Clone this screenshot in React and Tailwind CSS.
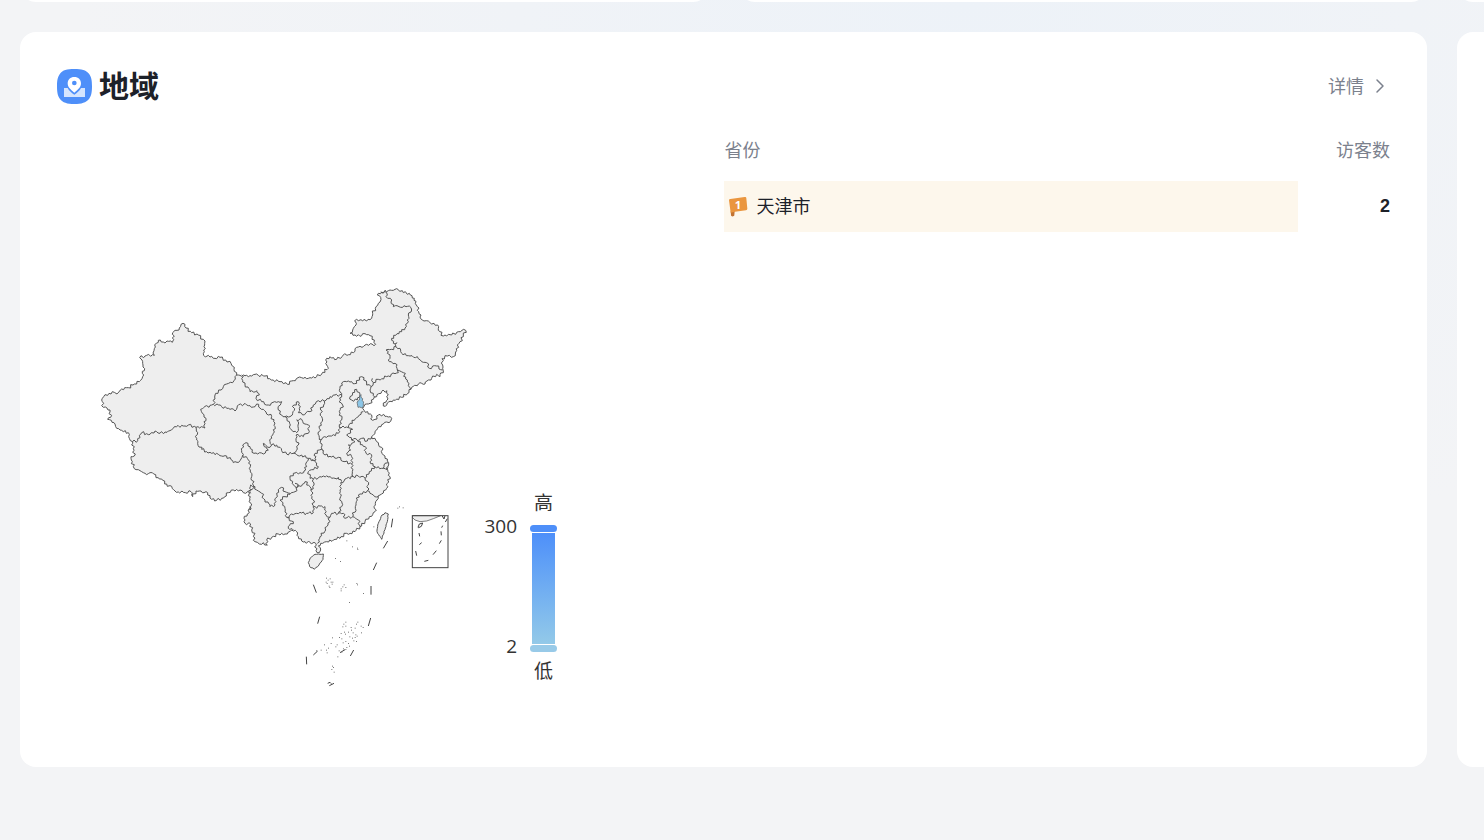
import React from "react";
import { ChevronRight } from "lucide-react";

const parse = (text) => text.trim().split(/\s+/).map((p) => p.split(",").map(Number));
const shift = (dx, dy) => (text) => parse(text).map(([x, y]) => [x + dx, y + dy]);

// Each sheet of the map has its own origin
const west  = shift(0, 90);
const south = shift(405, 240);
const north = shift(645, 0);
const sea   = shift(600, 660);

// Breaks long segments into small steps so borders look surveyed, not ruled
const rough = (points, amount = 4) => {
  const out = [points[0]];
  for (let i = 1; i < points.length; i++) {
    const [ax, ay] = points[i - 1];
    const [bx, by] = points[i];
    const len = Math.hypot(bx - ax, by - ay);
    const steps = Math.floor(len / 5);
    for (let s = 1; s < steps; s++) {
      const t = s / steps;
      const noise = Math.sin(ax * 12.9 + by * 78.2 + s * 37.7 + s * s * 5.3);
      out.push([
        Math.round(ax + (bx - ax) * t - ((by - ay) / len) * noise * amount),
        Math.round(ay + (by - ay) * t + ((bx - ax) / len) * noise * amount),
      ]);
    }
    out.push([bx, by]);
  }
  return "M" + out.map((p) => p.join(" ")).join("L");
};

const OUTLINE = [
  ...west("20,270 26,260 42,250 58,247 66,252 76,240 100,233 118,222 137,211 143,200 142,190 148,182 144,165 141,150 134,143 155,136 178,136 177,122 184,100 190,91 205,96 232,97 236,88 233,68 240,61 252,60 258,43 270,43 273,54 290,68 310,75 325,88 329,100 326,120 326,136 345,141 375,142 392,150 408,160 417,178 425,195"),
  ...south("40,45 60,47 85,46 105,48 130,60 150,65 172,73 190,62 215,53"),
  ...north("0,293 20,290 38,277 55,265 47,250 50,235 60,230 80,238 100,225 130,218 140,202 165,195 197,193 193,180 180,167 165,161 155,167 135,165 120,160 128,150 140,118 158,123 185,115 188,100 198,80 210,66 212,52 202,45 215,36 245,31 265,29 280,38 298,40 313,55 322,80 337,120 360,128 383,135 390,155 400,168 425,165 445,155 467,151 460,170 447,190 440,212 430,230 412,228 396,236 398,255 400,272 390,290 380,283 365,295 345,312 325,312 303,328 275,352 250,360 230,375 220,378"),
  ...south("460,135 475,105 470,92 455,95 440,110 430,118 420,130 405,133 398,145 403,152 425,165 422,177 435,178 450,163 485,175 482,184 460,192 440,210 430,225 425,230 440,245 455,262 460,285 472,303 476,315 468,325 474,335 480,350 472,370 470,385 450,405 445,415 437,425 435,455 418,470 405,485 390,500 375,515 350,520 333,530 310,540 290,545 272,550 265,558 272,570 268,578 258,572 257,550 240,548 215,543 205,530 200,515 185,510 165,522 145,522 125,532 110,540 112,555 100,548 88,552 75,545 70,530 75,520 65,510 62,492 45,490 42,475 52,462 62,440"),
  ...west("466,600 466,560 458,545 445,548 435,540 415,540 400,548 380,565 365,571 350,568 338,548 318,543 303,543 293,560 288,545 265,547 240,543 215,522 190,503 165,488 155,494 140,485 115,470 108,440 118,438 115,415 113,395 103,385 100,368 75,360 62,350 60,342 38,328 47,322 45,300 25,292 20,270"),
];

const BORDERS = [
  west("113,395 128,392 140,368 165,373 180,363 195,370 225,362 245,350 280,345 303,352"),
  west("303,352 330,354 327,335 333,325 322,310 317,298 355,283 362,250 378,240 395,222 417,212 425,195"),
  west("303,352 305,390 320,418 350,430 395,438 415,458 435,452 443,436 460,450 470,490 475,535 466,540 458,545"),
  south("38,288 38,255 48,248 60,260 72,280 100,282 115,270 100,250 120,262 125,255"),
  west("355,283 380,290 420,303 437,282 455,285 480,290"),
  south("75,140 80,132 100,148 125,170 135,200 128,225 120,245 125,255 140,255 155,272 170,282 190,280 215,285 235,295"),
  south("35,45 45,75 60,95 80,92 88,105 78,115 95,125 115,135 140,127 155,125 145,150 155,165 165,170 180,170 187,165 192,135 205,125 208,145 205,158 218,165 240,155 250,135 265,122 283,123 300,110 335,105"),
  south("165,170 178,185 185,210 200,218 205,205 200,180 215,178 220,190 235,195 238,215 220,230 198,225 205,255 190,280"),
  north("262,270 255,250 238,245 235,215 228,210 245,208 258,200 260,188 250,190 245,175 275,155 292,130 295,105 305,90 298,78 278,82 250,80 245,60 228,50 230,38 212,36"),
  north("258,200 270,205 275,220 300,228 322,230 335,245 350,248 358,265 380,258 398,270"),
  north("262,270 280,278 292,300 302,327"),
  north("262,270 265,278 230,290 205,298 190,308 187,295"),
  north("95,345 90,325 100,305 115,303 140,310 148,292 162,293 170,315 183,320 190,308"),
  north("183,320 180,330 190,340 195,352"),
  north("120,350 128,338 140,328 150,345 142,360 125,360 120,350"),
  south("335,105 327,125 338,135 330,160 335,180 328,200 325,220 300,228 268,238 268,205 278,180 272,150 283,123"),
  south("328,200 355,203 360,190 385,170 400,155"),
  south("355,203 368,208 350,225 365,240 375,235 385,245 395,235 412,243 425,230"),
  south("365,240 375,245 355,255 362,270 350,280 365,290 365,312 370,350"),
  south("268,238 280,272 285,285 325,292 345,305 365,312"),
  south("385,245 405,260 408,280 425,285 420,305 435,320 460,325 465,310 474,308"),
  south("460,325 470,330 474,322"),
  south("435,320 418,335 405,355 415,375 412,392 385,405 378,435 368,470 345,475 340,460 325,460"),
  south("370,350 385,348 405,355"),
  south("412,392 420,400 445,410"),
  south("368,470 385,480 390,500"),
  south("370,350 350,355 332,368 330,390 330,415 335,440 325,460 305,460 300,472 288,465 285,440 250,442"),
  south("250,358 270,350 290,347 305,355 325,352 335,365"),
  south("250,358 248,380 245,395 250,420 250,442 250,458 230,460 200,460 170,472"),
  south("300,472 290,500 270,530 262,550"),
  south("170,472 165,445 150,420 165,410 195,395 205,380 195,370"),
  south("62,400 62,375 75,380 80,390 95,400 105,420 120,440 135,435 140,400 155,382 165,395 180,400"),
  south("170,472 190,485 175,505 190,510"),
  south("235,295 230,320 215,340 190,340 180,355 195,380 215,378 225,365 240,380 246,390"),
  south("235,295 255,305 265,320 235,335 240,355 250,358"),
  south("245,298 258,300 255,280 268,270 280,272"),
];

const TIANJIN = north("148,360 149,348 153,344 153,352 158,356 157,362 161,366 159,382 144,382 141,366 148,360");
const HAINAN  = sea("45,175 60,163 85,162 84,178 72,195 58,208 44,200 40,188 45,175");
const TAIWAN  = sea("270,38 280,42 275,70 260,118 246,95 248,75 258,50 270,38");

const DASHES = "M293 56l-4 26M278 123l-13 22M245 188l-10 22M228 258v26M55 254l9 24M74 350l-6 21M227 354l-7 24M176 450l-10 18M34 470l1 23M98 550l7-3 4 4M103 557l14-7M55 465l13-12M135 458l15-9";

const ISLETS = parse(`
  236,80 308,24 313,20 324,23 188,148 187,144 172,140 121,175 136,184 155,122 128,112
  94,234 99,240 105,236 108,246 96,250 102,258 111,252 113,246 93,246 104,262 147,254 143,260 152,262 138,266 138,272 185,250
  187,254 205,280 163,307 152,366 146,372 152,378 143,380 184,372 188,366 198,378 204,382 169,390 160,396
  174,398 182,404 151,402 164,410 133,412 140,416 112,413 172,414 180,412 184,424 152,424 144,428 160,430 186,408
  108,430 126,434 122,440 100,444 94,450 96,458 78,450 64,452 132,452 145,446 152,448 140,456 155,442 163,438
  128,470 88,434 138,400 199,398 180,384 112,498 110,508 117,516 115,502 168,382 148,396 176,422
`);

const INSET = "M369 82l4-10 10-3-4 10-8 4zM372 99l2 10M373 134l7-6M362 153l3 14M388 184l12-3M414 164l10-12M433 131l6-10M438 94l1 12M440 83l3-6M451 66l6-10M441 47l6 10 3-10";

function ChinaMap() {
  return (
    <svg viewBox="0 0 1140 1245" className="ml-[38px] h-[415px] w-[380px] shrink-0" role="img" aria-label="访客地域分布">
      <g fill="#eeeeee" stroke="#555555" strokeWidth="3" strokeLinejoin="round">
        <path d={rough(OUTLINE)} />
        <path d={rough(HAINAN, 1)} />
        <path d={rough(TAIWAN, 1)} />
        <path d={BORDERS.map((b) => rough(b)).join("")} fill="none" />
        <path d={rough(TIANJIN, 1)} fill="#8cc6e7" strokeWidth="2" />
      </g>
      <g transform="translate(600 660)" stroke="#444444" fill="none" strokeWidth="3">
        <path d={DASHES} />
        <path d="M352 52l8 8 15 5 20-2 20-7 22-9h-84z" fill="#eeeeee" strokeWidth="2" />
        <path d={INSET} />
        <rect x="352" y="47" width="107" height="156" />
      </g>
      <g transform="translate(600 660)" fill="#777777">
        {ISLETS.map(([x, y], i) => (
          <rect key={i} x={x - 1} y={y - 1} width="3" height="3" />
        ))}
      </g>
    </svg>
  );
}

function Legend() {
  return (
    <div className="mb-3 ml-[10px] flex w-[72px] flex-col self-end font-['Open_Sans','Noto_Sans_CJK_SC',sans-serif] text-[19px] text-[#333333]">
      <span className="w-[27px] self-end text-center leading-6">高</span>
      <div className="mt-[10px] flex justify-between">
        <div className="-mt-0.5 mb-0.5 flex w-8 flex-col items-end justify-between leading-[7px]">
          <span>300</span>
          <span>2</span>
        </div>
        <div className="flex w-[27px] flex-col items-center">
          <div className="h-[7px] w-full rounded-full bg-[#4e8ff9]" />
          <div className="my-px h-[111px] w-[23px] bg-linear-to-b from-[#4e8ff9] to-[#93c9e8]" />
          <div className="h-[7px] w-full rounded-full bg-[#98cae8]" />
        </div>
      </div>
      <span className="mt-[7px] w-[27px] self-end text-center leading-6">低</span>
    </div>
  );
}

function RegionIcon() {
  return (
    <svg viewBox="0 0 105 105" className="h-[35px] w-[35px]" aria-hidden="true">
      <path d="M52 0C74 0 87 3 96 14c7 9 9 20 9 38s-2 29-9 38c-9 11-22 15-44 15S17 101 9 90C2 81 0 70 0 52s2-29 9-38C17 3 30 0 52 0z" fill="#4e8ff9" />
      <path d="M21 57h11c4 8 11 14 20 20 9-6 16-12 20-20h12v27H21z" fill="#d5e5fe" />
      <path d="M52 24c-12 0-20 8-20 19 0 12 9 19 20 28 11-9 20-16 20-28 0-11-8-19-20-19z" fill="#ffffff" />
      <circle cx="52" cy="42" r="7" fill="#4e8ff9" />
    </svg>
  );
}

function RankFlag() {
  return (
    <svg viewBox="0 0 60 66" className="h-[22px] w-5" aria-hidden="true">
      <path d="M8 46l12-1-1 13c0 4-10 5-10 0z" fill="#c27332" />
      <path d="M3 13q0-4 4-4l43-6q5-1 5 4l3 31q0 4-4 5l-33 4-13 3z" fill="#ea963f" />
      <text x="30" y="38" textAnchor="middle" fontSize="34" fontWeight="700" fill="#ffffff" fontFamily="Open Sans, sans-serif">1</text>
    </svg>
  );
}

const rows = [{ province: "天津市", visitors: 2 }];

export default function App() {
  return (
    <div className="min-h-screen overflow-hidden bg-[#f3f4f6] bg-[radial-gradient(ellipse_60%_70%_at_65%_0%,#edf2f8,#f3f4f6)] pl-5 font-['Noto_Sans_CJK_SC',sans-serif] text-[#1d2129]">
      {/* Bottom edge of the previous row */}
      <div className="flex h-0.5 items-end gap-[30px] overflow-hidden">
        <div className="h-10 flex-1 rounded-2xl bg-white" />
        <div className="h-10 flex-1 rounded-2xl bg-white" />
        <div className="h-10 w-[27px] rounded-l-2xl bg-white" />
      </div>

      <div className="mt-[30px] flex gap-[30px]">
        <section className="min-w-0 flex-1 rounded-2xl bg-white px-[37px] pt-9 pb-[72px]">
          <header className="flex h-9 items-center justify-between">
            <div className="flex items-center gap-[7px]">
              <RegionIcon />
              <h2 className="pb-1 text-[30px] leading-8 font-bold">地域</h2>
            </div>
            <a href="#detail" className="-mr-0.5 flex items-center gap-1 text-lg text-[#7b818d]">
              <span className="pb-0.5">详情</span>
              <ChevronRight className="h-6 w-6" strokeWidth={1.5} />
            </a>
          </header>

          <div className="grid grid-cols-2">
            <div className="flex pt-[176px]">
              <ChinaMap />
              <Legend />
            </div>

            <table className="mt-4 w-full self-start text-lg">
              <thead>
                <tr className="h-[61px] text-[#7b818d]">
                  <th scope="col" className="pb-1 pl-px text-left font-normal">省份</th>
                  <th scope="col" className="w-[92px] pb-1 text-right font-normal">访客数</th>
                </tr>
              </thead>
              <tbody>
                {rows.map((row) => (
                  <tr key={row.province} className="h-[51px]">
                    <td className="bg-[#fdf7ec] pl-1">
                      <div className="flex items-center gap-[9px]">
                        <RankFlag />
                        <span className="pb-1">{row.province}</span>
                      </div>
                    </td>
                    <td className="pb-0.5 text-right font-['Liberation_Sans',sans-serif] font-bold">{row.visitors}</td>
                  </tr>
                ))}
              </tbody>
            </table>
          </div>
        </section>

        <section className="w-[27px] rounded-l-2xl bg-white" />
      </div>
    </div>
  );
}
